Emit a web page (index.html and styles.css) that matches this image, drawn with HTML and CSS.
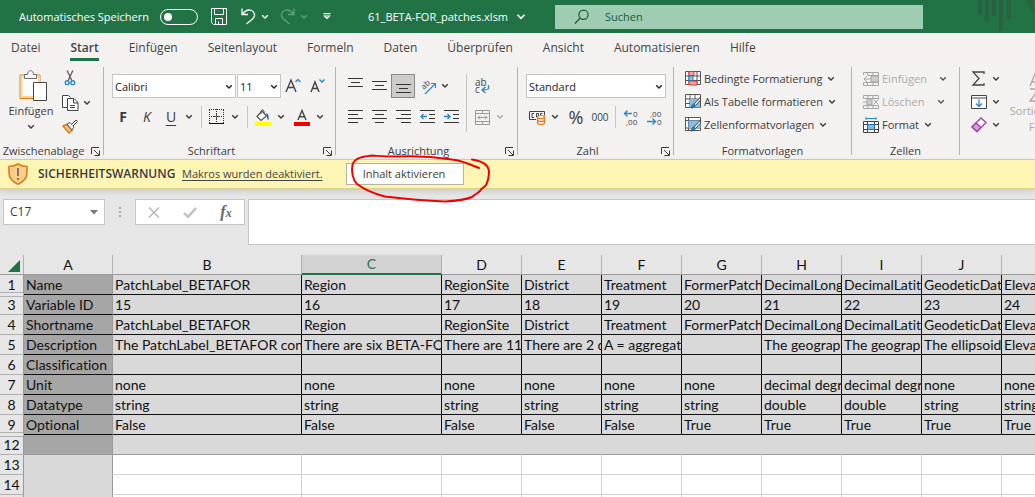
FILE: index.html
```html
<!DOCTYPE html>
<html lang="de">
<head>
<meta charset="utf-8">
<title>61_BETA-FOR_patches.xlsm</title>
<link rel="stylesheet" href="styles.css">
</head>
<body>
<svg width="0" height="0" class="defs" aria-hidden="true">
  <symbol id="chev" viewBox="0 0 8 6"><path d="M1.200 1.200L4 4l2.800-2.800" fill="none" stroke="currentColor" stroke-width="1.400"/></symbol>
  <symbol id="launch" viewBox="0 0 9 9"><path d="M.5 7V.5H8M3 3l5 5M8.500 3.500v5h-5" fill="none" stroke="currentColor"/></symbol>
</svg>

<header class="titlebar">
  <label class="autosave">Automatisches Speichern <input type="checkbox" role="switch"></label>
  <div class="quick">
    <button aria-label="Speichern"><svg width="16" height="17" viewBox="0 0 16 17"><path d="M.5.5h15v16H2.500l-2-2zM3.500.5v6h9v-6M4.500 16v-5.500h7V16M7.500 16v-2.500" fill="none" stroke="#fff"/></svg></button>
    <button aria-label="Rückgängig"><svg width="15" height="17" viewBox="0 0 15 17"><path d="M1 .5v6h6M1 6.500C4.500 2 8 1.500 10.500 2.500c3.500 1.500 4 5.500 1.500 8L5.500 16" fill="none" stroke="#fff" stroke-width="1.300"/></svg></button>
    <button class="arrow" aria-label="Rückgängig-Liste"><svg width="8" height="6"><use href="#chev"/></svg></button>
    <button class="dim" aria-label="Wiederholen"><svg width="15" height="17" viewBox="0 0 15 17"><path d="M14 .5v6H8M14 6.500C10.500 2 7 1.500 4.500 2.500 1 4 .5 8 3 10.500L9.500 16" fill="none" stroke="#fff" stroke-width="1.300"/></svg></button>
    <button class="arrow dim" aria-label="Wiederholen-Liste"><svg width="8" height="6"><use href="#chev"/></svg></button>
    <button class="more" aria-label="Symbolleiste anpassen"><svg width="8" height="7" viewBox="0 0 8 7"><path d="M.5.700h7M1.500 3L4 5.500 6.500 3z" fill="none" stroke="#fff" stroke-width="1.200"/></svg></button>
  </div>
  <button class="docname">61_BETA-FOR_patches.xlsm <svg width="10" height="8" viewBox="0 0 8 6"><use href="#chev"/></svg></button>
  <label class="search">
    <svg width="16" height="16" viewBox="0 0 16 16"><circle cx="9.500" cy="5.700" r="4.600" fill="none" stroke="#185c37" stroke-width="1.200"/><path d="M6 9.200L1 14.500" stroke="#185c37" stroke-width="1.300"/></svg>
    <input type="search" placeholder="Suchen" aria-label="Suchen">
  </label>
  <svg class="deco" width="57" height="33" viewBox="0 0 57 33" aria-hidden="true"><path d="M0 0h4v15H0zM7 0h4v22H7zM14 0h4v16h-4zM21 0h4v31h-4zM29 0h4v19h-4zM48 0h7v13z" fill="#2a6141"/></svg>
</header>

<nav class="tabs">
  <a href="#datei">Datei</a><a href="#start" class="active">Start</a><a href="#einfuegen">Einfügen</a><a href="#seitenlayout">Seitenlayout</a><a href="#formeln">Formeln</a><a href="#daten">Daten</a><a href="#ueberpruefen">Überprüfen</a><a href="#ansicht">Ansicht</a><a href="#automatisieren">Automatisieren</a><a href="#hilfe">Hilfe</a>
</nav>

<section class="ribbon">
  <div class="group g-clip">
    <div class="tools clip">
      <button class="paste">
        <svg width="28" height="31" viewBox="0 0 28 31"><path d="M1 5h20v23.500H1z" fill="#fbfbfb" stroke="#e07b20"/><path d="M2.500 6.500h17.500v20.500H2.500z" fill="#fbfbfb" stroke="#f8d48e" stroke-width="2"/><path d="M5.500 8.500V4.500h3C8.500 2 10 .700 11.500.700S14.500 2 14.500 4.500h3v4z" fill="#f7f7f7" stroke="#6b6b6b"/><path d="M14.500 12.500h13v18h-13z" fill="#fff" stroke="#444"/></svg>
        <span>Einfügen</span>
        <svg width="8" height="6"><use href="#chev"/></svg>
      </button>
      <div class="stack">
        <button aria-label="Ausschneiden"><svg width="12" height="16" viewBox="0 0 12 17"><path d="M3 .5l5 11M9 .5L4 11.500" stroke="#555" stroke-width="1.300"/><circle cx="3" cy="13.500" r="2" fill="none" stroke="#2b88c8" stroke-width="1.500"/><circle cx="9" cy="13.500" r="2" fill="none" stroke="#2b88c8" stroke-width="1.500"/></svg></button>
        <div class="row"><button aria-label="Kopieren"><svg width="17" height="16" viewBox="0 0 17 16"><path d="M5 12.500H.5V.5h6l2 2" fill="#fff" stroke="#444"/><path d="M5.500 3.500h6.500l4 4v8H5.500zM11.500 3.500V8H16M8 10.500h5M8 12.500h5" fill="#fff" stroke="#444"/></svg></button><button class="arrow" aria-label="Kopieren-Liste"><svg width="8" height="6"><use href="#chev"/></svg></button></div>
        <button aria-label="Format übertragen"><svg width="16" height="15" viewBox="0 0 16 15"><path d="M1 7l6 7 3-2.500L5 5.500z" fill="#f6c58a" stroke="#e07b20" stroke-width="1.500"/><path d="M5 5l3-1.500L12 8l-2 3z" fill="#fff" stroke="#555"/><path d="M9.500 5.500L14 1l1.500 1.500L11 7" fill="#fff" stroke="#444"/></svg></button>
      </div>
    </div>
    <div class="caption"><span>Zwischenablage</span><button aria-label="Zwischenablage öffnen"><svg width="9" height="9"><use href="#launch"/></svg></button></div>
  </div>

  <div class="group g-font">
    <div class="tools">
      <div class="row">
        <span class="combo c-font"><select aria-label="Schriftart"><option>Calibri</option></select><svg width="8" height="6"><use href="#chev"/></svg></span>
        <span class="combo c-size"><select aria-label="Schriftgrad"><option>11</option></select><svg width="8" height="6"><use href="#chev"/></svg></span>
        <button aria-label="Schriftgrad vergrößern"><svg width="16" height="16" viewBox="0 0 16 16"><path d="M1 14L6 2l5 12M2.800 9.500h6.400" fill="none" stroke="#444" stroke-width="1.400"/><path d="M10.500 4L13 1.500 15.500 4" fill="none" stroke="#2b88c8" stroke-width="1.400"/></svg></button>
        <button aria-label="Schriftgrad verkleinern"><svg width="16" height="16" viewBox="0 0 16 16"><path d="M2 14L6 4l4 10M3.500 10.500h5" fill="none" stroke="#444" stroke-width="1.400"/><path d="M10.500 1.500L13 4l2.500-2.500" fill="none" stroke="#2b88c8" stroke-width="1.400"/></svg></button>
      </div>
      <div class="row">
        <button class="fmt bold">F</button><button class="fmt italic">K</button><button class="fmt under">U</button><button class="arrow" aria-label="Unterstreichen-Liste"><svg width="8" height="6"><use href="#chev"/></svg></button>
        <i class="sep"></i>
        <button aria-label="Rahmen"><svg width="16" height="16" viewBox="0 0 16 16"><path d="M.5 1v13M14.500 1v13M7.500 0v13M0 .5h15M0 7.500h15" stroke="#333" stroke-dasharray="1 1"/><path d="M5 7.500h5M7.500 5v5" stroke="#555"/><path d="M0 14.500h15" stroke="#111"/></svg></button><button class="arrow" aria-label="Rahmen-Liste"><svg width="8" height="6"><use href="#chev"/></svg></button>
        <i class="sep"></i>
        <button aria-label="Füllfarbe"><svg width="16" height="17" viewBox="0 0 16 17"><path d="M2 7.500L7 2l4.500 5L6 11.500z" fill="#fff" stroke="#555" stroke-width="1.200"/><path d="M6 5V2q1.500-2.500 3 0v3" fill="none" stroke="#555"/><path d="M11 4q3.500.5 2.500 7-1.500 0-1.500-3" fill="#2b6da8"/><path d="M0 13h16v4H0z" fill="#ff0"/></svg></button><button class="arrow" aria-label="Füllfarbe-Liste"><svg width="8" height="6"><use href="#chev"/></svg></button>
        <button class="spaced" aria-label="Schriftfarbe"><svg width="16" height="17" viewBox="0 0 16 17"><path d="M4 11L8 1.500 12 11M5.500 7.800h5" fill="none" stroke="#444" stroke-width="1.400"/><path d="M0 13h16v4H0z" fill="#f00000"/></svg></button><button class="arrow" aria-label="Schriftfarbe-Liste"><svg width="8" height="6"><use href="#chev"/></svg></button>
      </div>
    </div>
    <div class="caption"><span>Schriftart</span><button aria-label="Schriftart öffnen"><svg width="9" height="9"><use href="#launch"/></svg></button></div>
  </div>

  <div class="group g-align">
    <div class="tools cols">
      <div>
        <div class="row">
          <button aria-label="Oben ausrichten"><svg width="15" height="16" viewBox="0 0 15 16"><path d="M0 .5h15M3 4.500h9M0 8.500h15" stroke="#333"/></svg></button>
          <button aria-label="Zentriert ausrichten"><svg width="15" height="16" viewBox="0 0 15 16"><path d="M0 3.500h15M3 7.500h9M0 11.500h15" stroke="#333"/></svg></button>
          <button class="pressed" aria-label="Unten ausrichten"><svg width="15" height="16" viewBox="0 0 15 16"><path d="M0 6.500h15M3 10.500h9M0 14.500h15" stroke="#333"/></svg></button>
          <button aria-label="Ausrichtung"><svg width="17" height="17" viewBox="0 0 17 17"><text class="tiny" transform="translate(5 12) rotate(-45)">ab</text><path d="M6 16L16 6M12 5.500h4.500V10" fill="none" stroke="#2b88c8" stroke-width="1.200"/></svg></button><button class="arrow" aria-label="Ausrichtung-Liste"><svg width="8" height="6"><use href="#chev"/></svg></button>
        </div>
        <div class="row">
          <button aria-label="Linksbündig"><svg width="15" height="14" viewBox="0 0 15 14"><path d="M0 .5h15M0 4.500h10M0 8.500h15M0 12.500h10" stroke="#333"/></svg></button>
          <button aria-label="Zentriert"><svg width="15" height="14" viewBox="0 0 15 14"><path d="M0 .5h15M3 4.500h9M0 8.500h15M3 12.500h9" stroke="#333"/></svg></button>
          <button aria-label="Rechtsbündig"><svg width="15" height="14" viewBox="0 0 15 14"><path d="M0 .5h15M5 4.500h10M0 8.500h15M5 12.500h10" stroke="#333"/></svg></button>
          <button aria-label="Einzug verkleinern"><svg width="15" height="14" viewBox="0 0 15 14"><path d="M0 .5h15M9 4.500h6M9 8.500h6M0 12.500h15" stroke="#333"/><path d="M1 6.500h6M3.500 4L1 6.500 3.500 9" fill="none" stroke="#2b88c8" stroke-width="1.300"/></svg></button>
          <button aria-label="Einzug vergrößern"><svg width="15" height="14" viewBox="0 0 15 14"><path d="M0 .5h15M9 4.500h6M9 8.500h6M0 12.500h15" stroke="#333"/><path d="M0 6.500h6M3.500 4L6 6.500 3.500 9" fill="none" stroke="#2b88c8" stroke-width="1.300"/></svg></button>
        </div>
      </div>
      <i class="sep tall"></i>
      <div>
        <div class="row"><button class="wrap" aria-label="Textumbruch"><svg width="18" height="18" viewBox="0 0 18 18"><text x="2" y="9" class="small">ab</text><text x="2" y="16" class="small">c</text><path d="M15.500 8v3.500q-1 1.500-6 1.500M12.500 10L9 13l3.500 3" fill="none" stroke="#2b88c8" stroke-width="1.300"/></svg></button></div>
        <div class="row"><button aria-label="Verbinden und zentrieren"><svg width="15" height="15" viewBox="0 0 15 15"><path d="M.5.5h14v14H.5zM.5 3.500h14M.5 11.500h14M7.500.5v3M7.500 11.500v3M3 7.500h9M5 5.500l-2 2 2 2M10 5.500l2 2-2 2" fill="none" stroke="#999"/></svg></button><button class="arrow off" aria-label="Verbinden-Liste"><svg width="8" height="6"><use href="#chev"/></svg></button></div>
      </div>
    </div>
    <div class="caption"><span>Ausrichtung</span><button aria-label="Ausrichtung öffnen"><svg width="9" height="9"><use href="#launch"/></svg></button></div>
  </div>

  <div class="group g-num">
    <div class="tools">
      <div class="row"><span class="combo c-num"><select aria-label="Zahlenformat"><option>Standard</option></select><svg width="8" height="6"><use href="#chev"/></svg></span></div>
      <div class="row">
        <button aria-label="Buchhaltungszahlenformat"><svg width="17" height="15" viewBox="0 0 17 15"><path d="M.5 9.500v-8h15v4M.5 9.500H7" fill="none" stroke="#444"/><path d="M5 3.500H3v4h2M9.500 7V3.500H7.500V7M11.500 5V3.500h2" fill="none" stroke="#444"/><path d="M8.500 7v6c0 2 7 2 7 0V7" fill="#fbe3c8" stroke="#e07b20" stroke-width="1.200"/><ellipse cx="12" cy="7" rx="3.500" ry="1.500" fill="#fff" stroke="#e07b20" stroke-width="1.200"/><path d="M8.500 10c0 2 7 2 7 0" fill="none" stroke="#e07b20" stroke-width="1.200"/></svg></button><button class="arrow" aria-label="Währung-Liste"><svg width="8" height="6"><use href="#chev"/></svg></button>
        <button class="pct spaced">%</button><button class="thou">000</button>
        <i class="sep near"></i>
        <button aria-label="Dezimalstelle hinzufügen"><svg width="17" height="17" viewBox="0 0 17 17"><path d="M1 4.500h8M4.500 1.500l-3 3 3 3" fill="none" stroke="#2b88c8" stroke-width="1.300"/><text x="10" y="8" class="tiny">0</text><text x="3" y="16" class="tiny">,00</text></svg></button><button aria-label="Dezimalstelle löschen"><svg width="17" height="17" viewBox="0 0 17 17"><text x="3" y="8" class="tiny">,00</text><path d="M0 12.500h8.500M5.500 9.500l3 3-3 3" fill="none" stroke="#2b88c8" stroke-width="1.300"/><text x="10" y="16" class="tiny">0</text></svg></button>
      </div>
    </div>
    <div class="caption"><span>Zahl</span><button aria-label="Zahl öffnen"><svg width="9" height="9"><use href="#launch"/></svg></button></div>
  </div>

  <div class="group g-styles">
    <div class="tools list">
      <button><svg width="16" height="15" viewBox="0 0 16 15"><path d="M.5.5h15v13H.5zM.5 5h15M.5 9.500h15M4 .5v13M12 .5v13" fill="#fff" stroke="#555"/><path d="M4 .5h5v4H4zM4 10h8v4H4z" fill="#f7a1a1" stroke="#d93636"/><path d="M4 5h4v4.500H4z" fill="#8cc4ee" stroke="#2b78b8"/></svg>Bedingte Formatierung<svg width="8" height="6"><use href="#chev"/></svg></button>
      <button><svg width="16" height="15" viewBox="0 0 16 15"><path d="M.5.5h15v13H.5zM.5 5h15M.5 9.500h15M5 .5v13M10 .5v13" fill="#fff" stroke="#555"/><path d="M5 5h10v8.500H5z" fill="#83bdea"/><path d="M15.500 3L9 10l1.500 1.500L15.500 6z" fill="#fff" stroke="#444"/><path d="M9 10q-2 0-3 4 4 0 4.500-2.500z" fill="#2b88c8" stroke="#1d5f96"/></svg>Als Tabelle formatieren<svg width="8" height="6"><use href="#chev"/></svg></button>
      <button><svg width="16" height="15" viewBox="0 0 16 15"><path d="M.5.5h15v13H.5zM.5 3.500h15M.5 11h15M3.500 .5v13" fill="#fff" stroke="#555"/><path d="M3.500 3.500h12V11h-12z" fill="#83bdea"/><path d="M15.500 3L9 10l1.500 1.500L15.500 6z" fill="#fff" stroke="#444"/><path d="M9 10q-2 0-3 4 4 0 4.500-2.500z" fill="#2b88c8" stroke="#1d5f96"/></svg>Zellenformatvorlagen<svg width="8" height="6"><use href="#chev"/></svg></button>
    </div>
    <div class="caption"><span>Formatvorlagen</span></div>
  </div>

  <div class="group g-cells">
    <div class="tools list">
      <button class="off"><svg width="16" height="14" viewBox="0 0 16 14"><path d="M4 .5h11.500v13H.5v-3M4.500 .5v3M.5 3V.5h4M10 .5v13M4.500 10v3.500M.5 10.500h15M5 3.500h10.500" fill="none" stroke="#a5a5a5"/><path d="M8 4h7.500v6H8z" fill="#ccc" stroke="#a5a5a5"/><path d="M1 7h7M4 4L1 7l3 3" fill="none" stroke="#a5a5a5"/></svg>Einfügen<svg class="far" width="8" height="6"><use href="#chev"/></svg></button>
      <button class="off"><svg width="16" height="14" viewBox="0 0 16 14"><path d="M.5 3.500V.5h15v3H.5M.5 10.500h15v3H.5zM5 .5v3M10 .5v3M5 10.500v3M10 10.500v3M0 7h4" fill="none" stroke="#a5a5a5"/><path d="M4 4h5v6H4z" fill="#ccc" stroke="#a5a5a5"/><path d="M10.500 4.500l5 5M15.500 4.500l-5 5" stroke="#a5a5a5"/></svg>Löschen<svg class="far" width="8" height="6"><use href="#chev"/></svg></button>
      <button><svg width="16" height="16" viewBox="0 0 16 16"><path d="M.5 4.500h15v11H.5zM.5 7.500h15M.5 12.500h15M4.500 4.500v11M11.500 4.500v11" fill="#fff" stroke="#444"/><path d="M4.500 7.500h7v5h-7z" fill="#7db9ea" stroke="#1f6fb0"/><path d="M3 1.500h10M3 0v3M13 0v3" stroke="#2b88c8"/></svg>Format<svg width="8" height="6"><use href="#chev"/></svg></button>
    </div>
    <div class="caption"><span>Zellen</span></div>
  </div>

  <div class="group g-edit">
    <div class="tools cols">
      <div class="list narrow">
        <button aria-label="Summe"><svg width="16" height="15" viewBox="0 0 16 15"><path d="M13 3V1H2l6 6.500L2 14h11v-2" fill="none" stroke="#444" stroke-width="1.300"/></svg><svg width="8" height="6"><use href="#chev"/></svg></button>
        <button aria-label="Ausfüllen"><svg width="16" height="14" viewBox="0 0 16 14"><path d="M.5.5h15v13H.5zM.5 3h15" fill="#fff" stroke="#444"/><path d="M8 4.500v7M5 8.500l3 3 3-3" fill="none" stroke="#2b88c8" stroke-width="1.300"/></svg><svg width="8" height="6"><use href="#chev"/></svg></button>
        <button aria-label="Löschen"><svg width="16" height="16" viewBox="0 0 16 16"><path d="M1 10L10 1l5 4.500L6 14.500z" fill="#fff" stroke="#a33fae" stroke-width="1.300"/><path d="M1 10l4-4 5 4.500-4 4z" fill="#d79bdd" stroke="#a33fae" stroke-width="1.300"/></svg><svg width="8" height="6"><use href="#chev"/></svg></button>
      </div>
      <button class="sort"><svg width="32" height="30" viewBox="0 0 32 30"><path d="M1 13L6 1l5 12M2.500 9h7M1 16h9L1 28h10" fill="none" stroke="#aaa" stroke-width="1.300"/></svg><span>Sortieren und Filtern</span></button>
    </div>
  </div>
</section>

<section class="warning">
  <svg width="20" height="22" viewBox="0 0 20 22"><path d="M10 1q4 2.500 9 2.500V10q0 7-9 11.200Q1 17 1 10V3.500Q6 3.500 10 1z" fill="#f9cf8b" stroke="#e07b20" stroke-width="1.600"/><path d="M10 5v8M10 15v2" stroke="#555" stroke-width="1.400"/></svg>
  <strong>SICHERHEITSWARNUNG</strong>
  <a href="#makros">Makros wurden deaktiviert.</a>
  <div class="enable">
    <button>Inhalt aktivieren</button>
    <svg class="mark" width="150" height="56" viewBox="346 150 150 56" aria-hidden="true"><path d="M472 159.500C482 161 488 164 489 171C489 178 487 183 486 185C484 188 481 188 480 191C478 193 474 195 472 197C465 200 455 201 445 201.500C430 201 405 199 385 196.500C375 194 365 190 357 184C353 180 351 172 352.500 165C354 159 359 157 372 155.500C380 156 388 157 400 156.500C415 156 435 157 452 159.500C460 160 465 163 469 164L479 168" fill="none" stroke="#f00000" stroke-width="2" stroke-linecap="round" stroke-linejoin="round"/></svg>
  </div>
</section>

<section class="formula">
  <button class="namebox">C17 <svg width="8" height="5" viewBox="0 0 8 5"><path d="M0 0h8L4 4.500z" fill="#777"/></svg></button>
  <svg class="dots" width="3" height="11" viewBox="0 0 3 11"><path d="M0 0h2v2H0zM0 4h2v2H0zM0 8h2v2H0z" fill="#aaa"/></svg>
  <div class="fxbox">
    <button aria-label="Abbrechen"><svg width="12" height="11" viewBox="0 0 12 11"><path d="M1 .5l10 10M11 .5l-10 10" stroke="#bdbdbd" stroke-width="1.700"/></svg></button>
    <button aria-label="Eingeben"><svg width="14" height="11" viewBox="0 0 14 11"><path d="M1 6l4 4 8-9" fill="none" stroke="#bdbdbd" stroke-width="2.200"/></svg></button>
    <button class="fx" aria-label="Funktion einfügen"><i>f<small>x</small></i></button>
  </div>
  <textarea aria-label="Bearbeitungsleiste"></textarea>
</section>

<main class="sheet">
<table>
  <colgroup><col class="w-num"><col class="w-a"><col class="w-b"><col class="w-c"><col span="8" class="w-d"></colgroup>
  <thead><tr><th class="corner"><svg width="12" height="12" viewBox="0 0 12 12"><path d="M12 0v12H0z" fill="#217346"/></svg></th><th>A</th><th>B</th><th class="sel">C</th><th>D</th><th>E</th><th>F</th><th>G</th><th>H</th><th>I</th><th>J</th><th></th></tr></thead>
  <tbody class="meta">
    <tr><th class="gap-below">1</th><td>Name</td><td>PatchLabel_BETAFOR</td><td>Region</td><td>RegionSite</td><td>District</td><td>Treatment</td><td>FormerPatch</td><td>DecimalLong</td><td>DecimalLatit</td><td>GeodeticDat</td><td>Eleva</td></tr>
    <tr><th class="gap-above">3</th><td>Variable ID</td><td>15</td><td>16</td><td>17</td><td>18</td><td>19</td><td>20</td><td>21</td><td>22</td><td>23</td><td>24</td></tr>
    <tr><th>4</th><td>Shortname</td><td>PatchLabel_BETAFOR</td><td>Region</td><td>RegionSite</td><td>District</td><td>Treatment</td><td>FormerPatch</td><td>DecimalLong</td><td>DecimalLatit</td><td>GeodeticDat</td><td>Eleva</td></tr>
    <tr><th>5</th><td>Description</td><td>The PatchLabel_BETAFOR cons</td><td>There are six BETA-FOR</td><td>There are 11</td><td>There are 2 d</td><td>A = aggregate</td><td></td><td>The geograp</td><td>The geograp</td><td>The ellipsoid</td><td>Eleva</td></tr>
    <tr><th>6</th><td>Classification</td><td></td><td></td><td></td><td></td><td></td><td></td><td></td><td></td><td></td><td></td></tr>
    <tr><th>7</th><td>Unit</td><td>none</td><td>none</td><td>none</td><td>none</td><td>none</td><td>none</td><td>decimal degr</td><td>decimal degr</td><td>none</td><td>none</td></tr>
    <tr><th>8</th><td>Datatype</td><td>string</td><td>string</td><td>string</td><td>string</td><td>string</td><td>string</td><td>double</td><td>double</td><td>string</td><td>string</td></tr>
    <tr><th class="gap-below">9</th><td>Optional</td><td>False</td><td>False</td><td>False</td><td>False</td><td>False</td><td>True</td><td>True</td><td>True</td><td>True</td><td>True</td></tr>
    <tr class="last"><th class="gap-above">12</th><td></td><td></td><td></td><td></td><td></td><td></td><td></td><td></td><td></td><td></td><td></td></tr>
  </tbody>
  <tbody class="free">
    <tr><th>13</th><td></td><td></td><td></td><td></td><td></td><td></td><td></td><td></td><td></td><td></td><td></td></tr>
    <tr><th>14</th><td></td><td></td><td></td><td></td><td></td><td></td><td></td><td></td><td></td><td></td><td></td></tr>
    <tr><th></th><td></td><td></td><td></td><td></td><td></td><td></td><td></td><td></td><td></td><td></td><td></td></tr>
  </tbody>
</table>
</main>
</body>
</html>
```
FILE: styles.css
```css
* { box-sizing: border-box; }
body {
  margin: 0;
  height: 100vh;
  overflow: hidden;
  display: flex;
  flex-direction: column;
  background: #e6e6e6;
  color: #3b3b3b;
  font: 11px/16px "Open Sans", "Noto Sans", sans-serif;
}
button, input, select, textarea { font: inherit; color: inherit; }
button { border: 0; padding: 0; background: none; display: inline-flex; align-items: center; justify-content: center; white-space: nowrap; }
svg { flex: none; display: block; }
.defs { position: absolute; }
.tiny { font: 8px "Open Sans", sans-serif; fill: #444; }
.small { font: 10px "Open Sans", sans-serif; fill: #444; }

/* title bar */
.titlebar { display: flex; align-items: center; flex: none; height: 33px; padding-left: 19px; background: #217346; color: #fff; overflow: hidden; }
.autosave { display: flex; align-items: center; justify-content: space-between; width: 179px; white-space: nowrap; }
.autosave input { appearance: none; flex: none; width: 38px; height: 16px; margin: 0; padding: 3px; border: 1px solid #fff; border-radius: 8px; display: flex; }
.autosave input::before { content: ""; width: 8px; height: 8px; border-radius: 50%; background: #fff; }
.quick { display: flex; align-items: center; width: 170px; padding-left: 13px; }
.quick button { margin-right: 14px; }
.quick .arrow { width: 10px; margin: 0 10px 0 -10px; }
.quick .more { margin: 0 0 0 4px; }
.dim { opacity: .3; }
.docname { width: 158px; justify-content: space-between; }
.search { display: flex; align-items: center; gap: 15px; width: 368px; height: 24px; margin-left: 29px; padding-left: 19px; background: #9fcdb4; color: #185c37; }
.search input { flex: 1; border: 0; padding: 0; background: none; outline: 0; }
.search input::placeholder { color: #185c37; opacity: 1; }
.deco { margin-left: auto; }

/* tabs */
.tabs { display: flex; flex: none; gap: 30px; height: 31px; padding: 5px 11px 0; background: #f3f2f1; font-size: 12px; line-height: 20px; white-space: nowrap; }
.tabs a { color: #444; text-decoration: none; height: 23px; }
.tabs .active { font-weight: 600; border-bottom: 3px solid #217346; }

/* ribbon */
.ribbon { display: flex; flex: none; height: 96px; padding: 3px 0 0; background: #f3f2f1; border-bottom: 1px solid #d0cec8; overflow: hidden; }
.group { flex: none; display: flex; flex-direction: column; justify-content: space-between; padding-right: 1px; background: linear-gradient(#b5b3b1, #b5b3b1) right top / 1px 88px no-repeat; }
.g-clip { width: 104px; }
.g-font { width: 232px; }
.g-align { width: 182px; }
.g-num { width: 156px; }
.g-styles { width: 178px; }
.g-cells { width: 108px; }
.g-edit { width: 130px; background: none; }
.tools { padding: 7px 0 0 7px; }
.cols { display: flex; }
.row { display: flex; align-items: center; height: 24px; }
.row + .row { margin-top: 7px; }
.row button { width: 24px; height: 24px; }
.row .arrow { width: 12px; }
.row .spaced { margin-left: 3px; }
.sep { width: 1px; height: 22px; margin: 0 3px 0 6px; background: #c8c6c4; }
.sep.tall { height: 58px; margin: 0 3px; }
.sep.near { margin: 0 3px; }
.off { color: #aaa; }
.caption { display: flex; align-items: center; height: 16px; }
.caption span { flex: 1; text-align: center; white-space: nowrap; }
.caption button { width: 16px; }
.pressed.pressed { height: 24px; background: #cdcccb; border: 1px solid #8a8886; }
.fmt { font-size: 14px; }
.bold { font-weight: 700; }
.italic { font-style: italic; }
.under { text-decoration: underline; text-underline-offset: 3px; }
.pct { font-size: 18px; }
.thou { font-size: 10px; }

.combo { position: relative; height: 24px; background: #fff; border: 1px solid #c8c6c4; color: #222; }
.combo select { appearance: none; width: 100%; height: 22px; padding: 1px 0 0 2px; border: 0; background: none; outline: 0; }
.combo svg { position: absolute; right: 2px; top: 9px; pointer-events: none; }
.c-font { width: 124px; margin: 0 1px; }
.c-size { width: 44px; }
.c-num { width: 140px; margin-left: 1px; }

.clip { display: flex; align-items: flex-start; padding: 0; }
.paste { flex-direction: column; width: 62px; padding: 3px 0 0 4px; }
.paste span { margin: 2px 4px 5px 0; }
.paste svg:last-child { margin-right: 4px; }
.stack { display: flex; flex-direction: column; align-items: flex-start; height: 67px; padding-top: 3px; justify-content: space-between; }
.stack .row { height: 16px; margin: 0; }
.stack .row button { height: 16px; justify-content: flex-start; }
.stack .row .arrow { width: 8px; margin-left: -3px; }
.stack > button { width: 16px; }

.list { display: flex; flex-direction: column; align-items: flex-start; padding: 0 0 0 11px; }
.list button { height: 23px; gap: 3px; }
.list svg + svg, .list button svg:last-child { margin-left: 2px; }
.list .far:last-child { margin-left: 9px; color: #555; }
.narrow button { gap: 3px; }
.g-edit .tools { padding: 0; }
.sort { flex-direction: column; width: 76px; margin-left: 7px; padding-top: 5px; color: #aaa; }
.sort span { white-space: normal; text-align: center; }

/* security message */
.warning { display: flex; flex: none; align-items: center; height: 29px; padding-left: 8px; background: #fdf5b4; border-bottom: 1px solid #dcd48e; box-shadow: 0 2px 6px #0002; white-space: nowrap; }
.warning strong { width: 144px; margin-left: 10px; font-size: 12px; font-weight: 600; }
.warning a { width: 164px; color: #444; text-underline-offset: 2px; }
.enable { position: relative; }
.enable button { width: 118px; height: 22px; padding-right: 2px; background: #fff; border: 1px solid #b5b3a5; }
.mark { position: absolute; left: 0; top: -13px; pointer-events: none; }

/* formula bar */
.formula { display: flex; flex: none; align-items: flex-start; padding: 10px 0 10px 3px; }
.namebox { width: 102px; height: 26px; padding: 0 6px; font-size: 12px; justify-content: space-between; background: #fff; border: 1px solid #c6c6c6; }
.dots { margin: 8px 13px 0 14px; }
.fxbox { display: flex; width: 110px; height: 26px; background: #fff; border: 1px solid #c6c6c6; }
.fxbox button { flex: 1; }
.fxbox .fx { font: bold 16px "Liberation Serif", serif; color: #666; }
.fx small { font-size: 12px; }
.formula textarea { flex: 1; height: 46px; margin-left: 3px; border: 1px solid #c6c6c6; border-right: 0; background: #fff; resize: none; outline: 0; }

/* grid */
.sheet { flex: 1; min-height: 0; overflow: hidden; background: #fff; }
table { width: 1082px; table-layout: fixed; border-collapse: separate; border-spacing: 0; color: #111; font: 14px/18px Lato, "Open Sans", sans-serif; font-variant-ligatures: none; }
.w-num { width: 24px; }
.w-a { width: 89px; }
.w-b { width: 189px; }
.w-c { width: 140px; }
.w-d { width: 80px; }
th, td { height: 20px; padding: 0; font-weight: 400; overflow: hidden; white-space: nowrap; }
th { background: #e6e6e6; border-right: 1px solid #b1b1b1; border-bottom: 1px solid #b1b1b1; text-align: center; }
thead th { border-bottom-color: #999; }
.corner svg { margin: 3px 0 0 8px; }
.sel { background: #d2d2d2; color: #217346; border-bottom: 2px solid #217346; }
tbody th { border-right-color: #999; }
td { padding-left: 2px; border-right: 1px solid #111; border-bottom: 1px solid #111; }
.meta td { background: #d9d9d9; }
.meta td:nth-child(2) { background: #a6a6a6; border-right-color: #999; }
.meta .last td { border-right-color: transparent; border-bottom-color: #999; }
.meta .last td:nth-child(2) { border-right-color: #999; }
.free td { background: #fff; border-color: #d0d0d0; }
.free td:nth-child(2) { background: #d9d9d9; border-right-color: #999; border-bottom-color: #d9d9d9; }
.gap-below { border-bottom-color: #e6e6e6; background: linear-gradient(#b1b1b1, #b1b1b1) 0 17px / 100% 1px no-repeat #e6e6e6; }
.gap-above { background: linear-gradient(#b1b1b1, #b1b1b1) 0 1px / 100% 1px no-repeat #e6e6e6; }
```
